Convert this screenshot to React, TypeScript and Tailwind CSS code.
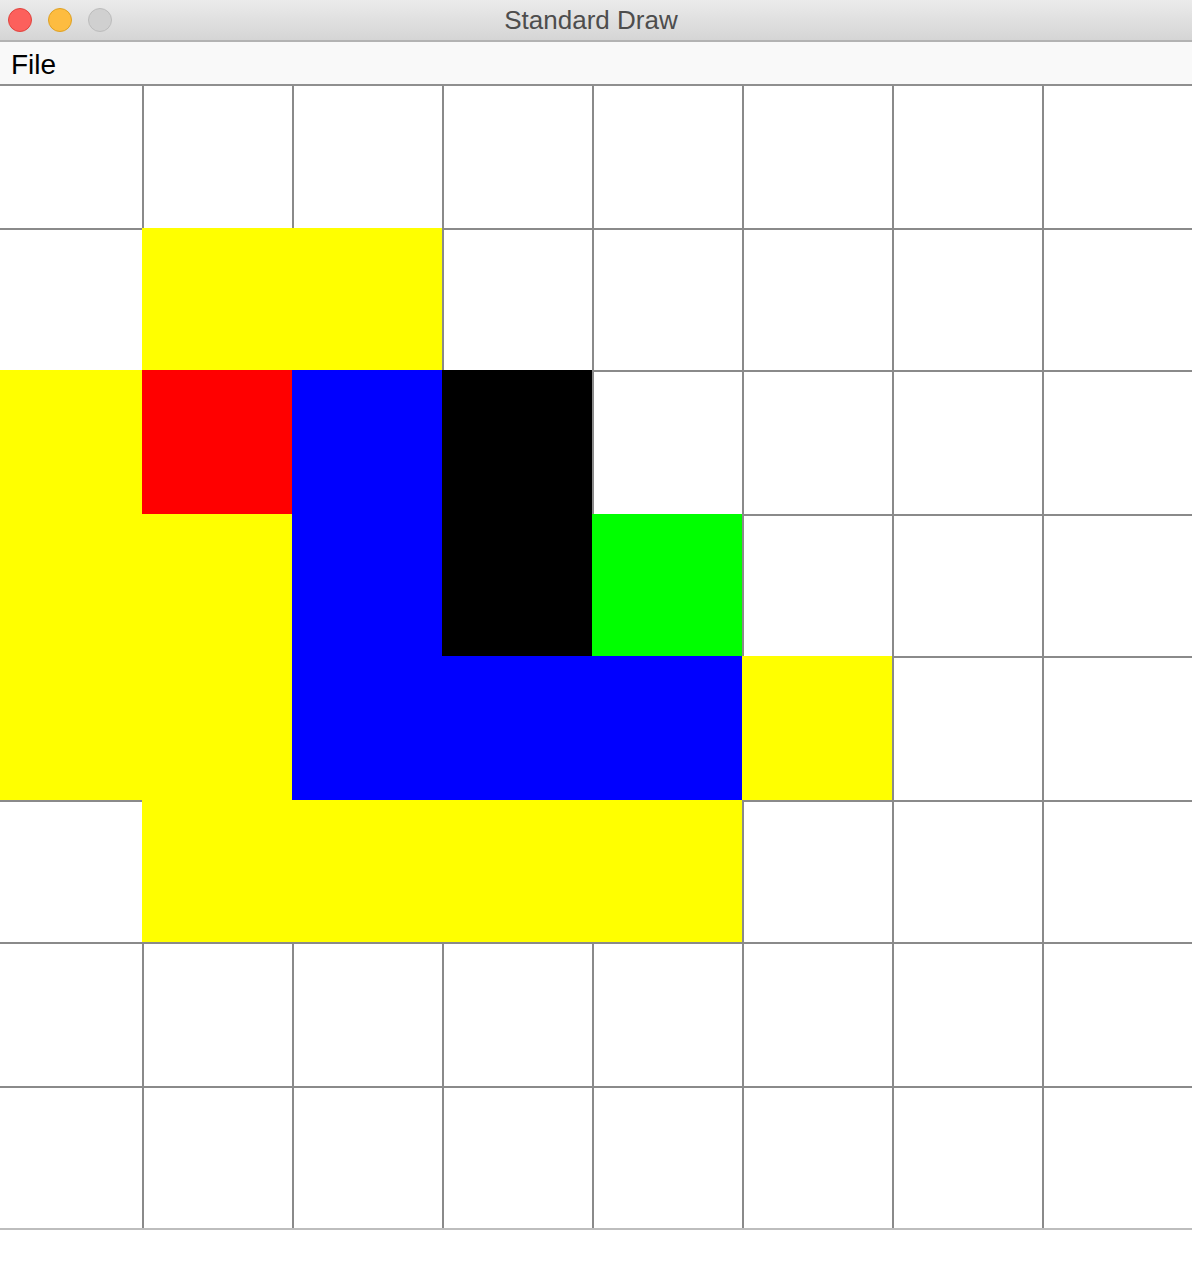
const fills: Record<string, string> = {
  Y: 'bg-[#ffff00] -ml-[2px] -mt-[2px]',
  R: 'bg-[#ff0000] -ml-[2px] -mt-[2px]',
  B: 'bg-[#0000ff] -ml-[2px] -mt-[2px]',
  K: 'bg-black -ml-[2px] -mt-[2px]',
  G: 'bg-[#00ff00] -ml-[2px] -mt-[2px]',
  '.': 'bg-white',
};

// 8x8 board, one string per row
const board = [
  '........',
  '.YY.....',
  'YRBK....',
  'YYBKG...',
  'YYBBBY..',
  '.YYYY...',
  '........',
  '........',
];

function TitleBar() {
  return (
    <div className="flex h-[42px] items-center border-b-2 border-[#b3b3b3] bg-gradient-to-b from-[#ebebeb] to-[#d5d5d5]">
      <div className="flex w-[120px] items-center gap-[16px] pl-[8px]">
        <span className="h-[24px] w-[24px] rounded-full border border-[#e0443e] bg-[#fc605c]" />
        <span className="h-[24px] w-[24px] rounded-full border border-[#dea123] bg-[#fdbc40]" />
        <span className="h-[24px] w-[24px] rounded-full border border-[#bcbcbc] bg-[#d0d0d0]" />
      </div>
      <div className="flex-1 text-center font-['Liberation_Sans',sans-serif] text-[26px] leading-none text-[#4d4d4d]">
        Standard Draw
      </div>
      <div className="w-[130px]" />
    </div>
  );
}

function MenuBar() {
  return (
    <div className="flex h-[44px] items-center border-b-2 border-[#8f8f8f] bg-[#f9f9f9] pl-[11px] pt-[3px]">
      <span className="font-['Liberation_Sans',sans-serif] text-[28px] leading-none text-black">File</span>
    </div>
  );
}

export default function App() {
  return (
    <div className="flex h-[1284px] w-[1192px] flex-col overflow-hidden bg-white">
      <TitleBar />
      <MenuBar />
      <div className="grid grid-cols-[142px_repeat(7,148px)] grid-rows-[142px_140px_142px_140px_142px_140px_142px_140px] gap-[2px] overflow-hidden border-b-2 border-[#bdbdbd] bg-[#8a8a8a]">
        {board.map((row, r) =>
          row.split('').map((c, i) => <div key={`${r}-${i}`} className={fills[c]} />),
        )}
      </div>
    </div>
  );
}
